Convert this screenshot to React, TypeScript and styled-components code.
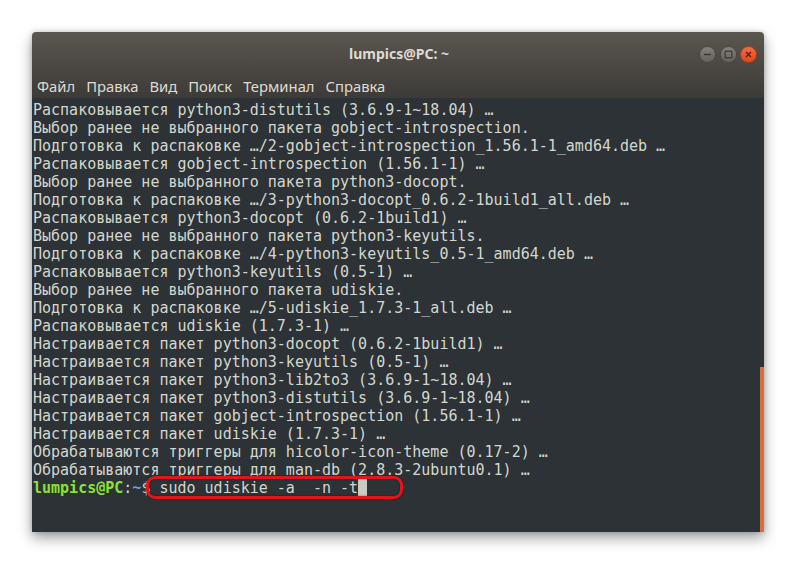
import React from "react";
import styled, { createGlobalStyle } from "styled-components";

const Global = createGlobalStyle`
  html, body { margin: 0; padding: 0; background: #ffffff; }
  body { width: 796px; height: 564px; overflow: hidden; }
`;

const Page = styled.div`
  padding: 32px 32px 0 32px;
`;

const Window = styled.div`
  width: 732px;
  height: 500px;
  display: flex;
  flex-direction: column;
  border-radius: 4px 4px 0 0;
  overflow: hidden;
  box-shadow: 0 6px 14px rgba(0, 0, 0, 0.38), 0 0 5px rgba(0, 0, 0, 0.18);
`;

const Header = styled.div`
  background: linear-gradient(#5a5650 0%, #4a4743 55%, #3d3b37 100%);
  display: flex;
  flex-direction: column;
`;

const TitleBar = styled.div`
  height: 42px;
  display: grid;
  grid-template-columns: 1fr auto 1fr;
  align-items: center;
`;

const Title = styled.div`
  grid-column: 2;
  font-family: "Noto Sans", "Open Sans", sans-serif;
  font-weight: 700;
  font-size: 14px;
  color: #dfdbd2;
  padding-top: 1px;
  padding-left: 2px;
`;

const Controls = styled.div`
  grid-column: 3;
  justify-self: end;
  display: flex;
  gap: 3.5px;
  padding-right: 7px;
  padding-top: 3px;
`;

const CircleBtn = styled.div<{ $close?: boolean }>`
  width: 17px;
  height: 17px;
  border-radius: 50%;
  display: flex;
  align-items: center;
  justify-content: center;
  box-sizing: border-box;
  background: ${(p) =>
    p.$close
      ? "linear-gradient(#f26d3d, #e2481b)"
      : "linear-gradient(#85827d, #63615d)"};
  border: 1px solid ${(p) => (p.$close ? "#b63c15" : "#4a4844")};
`;

const MenuBar = styled.div`
  height: 24px;
  display: flex;
  align-items: center;
  gap: 11px;
  padding-left: 5px;
  font-family: "Noto Sans", "Open Sans", sans-serif;
  font-size: 14.8px;
  color: #dfdbd2;
`;

const MenuItem = styled.span`
  line-height: 24px;
`;

const Body = styled.div`
  flex: 1;
  background: #2c3235;
  display: grid;
  grid-template-columns: 1fr 4px;
  min-height: 0;
`;

const Output = styled.div`
  padding: 3px 0 0 1px;
  font-family: "DejaVu Sans Mono", "Liberation Mono", monospace;
  font-size: 15px;
  line-height: 18px;
  color: #d3d7cf;
  white-space: pre;
`;

const Line = styled.div`
  height: 18px;
`;

const User = styled.span`
  color: #8ae234;
  font-weight: 700;
`;

const Path = styled.span`
  color: #729fcf;
  font-weight: 700;
`;

const Command = styled.span`
  position: relative;
  &::after {
    content: "";
    position: absolute;
    left: -13px;
    right: -36px;
    top: -3px;
    bottom: -2px;
    border: 3px solid #e3141b;
    border-radius: 9px;
    box-shadow: 0 0 2px rgba(0, 0, 0, 0.6), inset 0 0 2px rgba(0, 0, 0, 0.5);
  }
`;

const Cursor = styled.span`
  display: inline-block;
  width: 9px;
  height: 18px;
  vertical-align: top;
  background: #c9ccc6;
`;

const ScrollTrack = styled.div`
  display: flex;
  flex-direction: column;
  justify-content: flex-end;
`;

const ScrollThumb = styled.div`
  height: 165px;
  background: #d4703f;
`;

const lines = [
  "Распаковывается python3-distutils (3.6.9-1~18.04) …",
  "Выбор ранее не выбранного пакета gobject-introspection.",
  "Подготовка к распаковке …/2-gobject-introspection_1.56.1-1_amd64.deb …",
  "Распаковывается gobject-introspection (1.56.1-1) …",
  "Выбор ранее не выбранного пакета python3-docopt.",
  "Подготовка к распаковке …/3-python3-docopt_0.6.2-1build1_all.deb …",
  "Распаковывается python3-docopt (0.6.2-1build1) …",
  "Выбор ранее не выбранного пакета python3-keyutils.",
  "Подготовка к распаковке …/4-python3-keyutils_0.5-1_amd64.deb …",
  "Распаковывается python3-keyutils (0.5-1) …",
  "Выбор ранее не выбранного пакета udiskie.",
  "Подготовка к распаковке …/5-udiskie_1.7.3-1_all.deb …",
  "Распаковывается udiskie (1.7.3-1) …",
  "Настраивается пакет python3-docopt (0.6.2-1build1) …",
  "Настраивается пакет python3-keyutils (0.5-1) …",
  "Настраивается пакет python3-lib2to3 (3.6.9-1~18.04) …",
  "Настраивается пакет python3-distutils (3.6.9-1~18.04) …",
  "Настраивается пакет gobject-introspection (1.56.1-1) …",
  "Настраивается пакет udiskie (1.7.3-1) …",
  "Обрабатываются триггеры для hicolor-icon-theme (0.17-2) …",
  "Обрабатываются триггеры для man-db (2.8.3-2ubuntu0.1) …",
];

const menu = ["Файл", "Правка", "Вид", "Поиск", "Терминал", "Справка"];

export default function App() {
  return (
    <>
      <Global />
      <Page>
        <Window>
          <Header>
            <TitleBar>
              <Title>lumpics@PC: ~</Title>
              <Controls>
                <CircleBtn>
                  <svg width="9" height="9" viewBox="0 0 9 9">
                    <line x1="1" y1="4.5" x2="8" y2="4.5" stroke="#3a3935" strokeWidth="1.3" />
                  </svg>
                </CircleBtn>
                <CircleBtn>
                  <svg width="9" height="9" viewBox="0 0 9 9">
                    <rect x="1.2" y="1.2" width="6.6" height="6.6" fill="none" stroke="#3a3935" strokeWidth="1.2" />
                  </svg>
                </CircleBtn>
                <CircleBtn $close>
                  <svg width="9" height="9" viewBox="0 0 9 9">
                    <path d="M2 2 L7 7 M7 2 L2 7" stroke="#5a1e08" strokeWidth="1.4" />
                  </svg>
                </CircleBtn>
              </Controls>
            </TitleBar>
            <MenuBar>
              {menu.map((m) => (
                <MenuItem key={m}>{m}</MenuItem>
              ))}
            </MenuBar>
          </Header>
          <Body>
            <Output>
              {lines.map((l, i) => (
                <Line key={i}>{l}</Line>
              ))}
              <Line>
                <User>lumpics@PC</User>:<Path>~</Path>${" "}
                <Command>
                  sudo udiskie -a  -n -t<Cursor />
                </Command>
              </Line>
            </Output>
            <ScrollTrack>
              <ScrollThumb />
            </ScrollTrack>
          </Body>
        </Window>
      </Page>
    </>
  );
}
